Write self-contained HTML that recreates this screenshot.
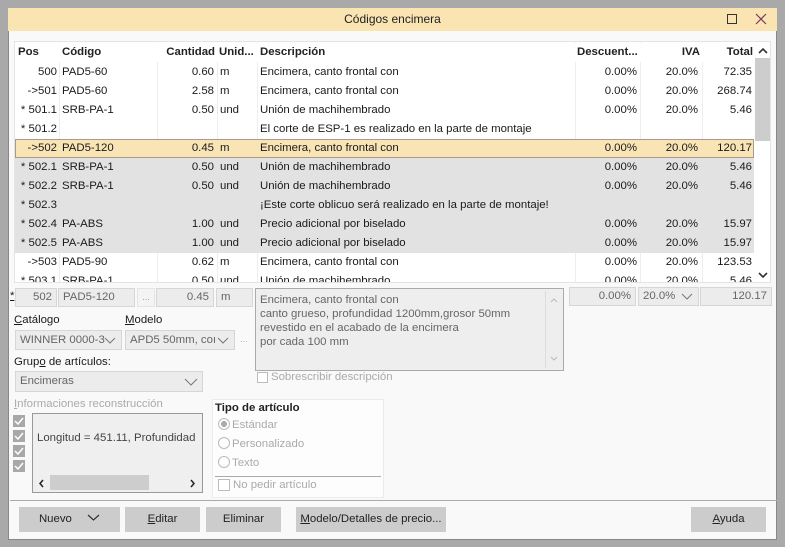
<!DOCTYPE html>
<html><head><meta charset="utf-8">
<style>
*{box-sizing:border-box;margin:0;padding:0}
body{width:785px;height:547px;overflow:hidden;background:#a9a9a9;font-family:"Liberation Sans",sans-serif;font-size:11.4px;color:#1a1a1a;position:relative}
.a{position:absolute}
#win{left:8px;top:8px;width:769px;height:532px;background:#f9f9f9;border:1px solid #888}
#title{left:8px;top:8px;width:769px;height:23px;background:#f9e4b2;text-align:center;line-height:22px;font-size:12px;color:#222}
#grid{left:14px;top:41px;width:757px;height:242px;background:#fff;border:1px solid #e4e4e4;overflow:hidden}
.row{position:absolute;left:0;width:739px;height:19px;line-height:19px;white-space:nowrap}
.c{position:absolute;top:0;height:19px;overflow:hidden}
.r{text-align:right}
.hdr{font-weight:bold;color:#222}
.vl{position:absolute;top:0;width:1px;height:242px;background:#eee}
.fld{position:absolute;height:19px;border:1px solid #d6d6d6;background:#ececec;color:#666;line-height:17px;padding:0 4px;white-space:nowrap;overflow:hidden}
.btn{position:absolute;top:507px;height:25px;background:#cccccc;text-align:center;line-height:25px;color:#222}
.lbl{position:absolute;white-space:nowrap}
.gr{color:#aaa}
.rad{display:inline-block;width:12px;height:12px;border:1px solid #bbb;border-radius:50%;vertical-align:-2px;margin-right:2px;position:relative}
</style></head><body>
<div id="win" class="a"></div>
<div id="title" class="a">Códigos encimera</div>
<div class="a" style="left:727px;top:14px;width:10px;height:10px;border:1px solid #333"></div>
<svg class="a" style="left:755px;top:13px" width="12" height="12"><path d="M1 1L11 11M11 1L1 11" stroke="#7a3a6a" stroke-width="1.2"/></svg>

<div id="grid" class="a">
 <div class="vl" style="left:44px"></div><div class="vl" style="left:142px"></div><div class="vl" style="left:202px"></div><div class="vl" style="left:242px"></div><div class="vl" style="left:560px"></div><div class="vl" style="left:625px"></div><div class="vl" style="left:687px"></div>
 <div class="row hdr" style="top:1px;background:#fff">
  <div class="c" style="left:3px">Pos</div><div class="c" style="left:47px">Código</div><div class="c r" style="left:142px;width:58px">Cantidad</div><div class="c" style="left:204px;width:38px">Unid...</div><div class="c" style="left:245px">Descripción</div><div class="c" style="left:562px;width:62px">Descuent...</div><div class="c r" style="left:626px;width:59px">IVA</div><div class="c r" style="left:688px;width:50px">Total</div>
 </div>
 <div id="rows"></div>
 <div class="a" style="left:740px;top:0;width:16px;height:242px;background:#fff"></div>
 <div class="a" style="left:740px;top:16px;width:15px;height:83px;background:#cdcdcd"></div>
 <svg class="a" style="left:743px;top:5px" width="10" height="7"><path d="M1 6L5 2L9 6" stroke="#333" stroke-width="1.6" fill="none"/></svg>
 <svg class="a" style="left:743px;top:230px" width="10" height="7"><path d="M1 1L5 5L9 1" stroke="#333" stroke-width="1.6" fill="none"/></svg>
</div>

<div class="lbl" style="left:10px;top:290px;text-decoration:underline">*</div>
<div class="fld r" style="left:15px;top:288px;width:42px">502</div>
<div class="fld" style="left:58px;top:288px;width:77px">PAD5-120</div>
<div class="fld" style="left:137px;top:288px;width:18px;background:#f4f4f4;border-color:#e4e4e4;text-align:center;font-size:9px;color:#999">...</div>
<div class="fld r" style="left:156px;top:288px;width:58px">0.45</div>
<div class="fld" style="left:216px;top:288px;width:37px">m</div>
<div class="a" style="left:255px;top:288px;width:309px;height:83px;border:1px solid #aaa;background:#eeeeee;color:#666;padding:4px 4px;line-height:14px">Encimera, canto frontal con<br>canto grueso, profundidad 1200mm,grosor 50mm<br>revestido en el acabado de la encimera<br>por cada 100 mm</div>
<div class="a" style="left:545px;top:291px;width:1px;height:77px;background:#ddd"></div>
<svg class="a" style="left:550px;top:297px" width="8" height="6"><path d="M1 5L4 2L7 5" stroke="#bbb" fill="none"/></svg>
<svg class="a" style="left:550px;top:356px" width="8" height="6"><path d="M1 1L4 4L7 1" stroke="#bbb" fill="none"/></svg>
<div class="fld r" style="left:569px;top:287px;width:67px">0.00%</div>
<div class="fld" style="left:638px;top:287px;width:61px">20.0%<svg class="a" style="left:42px;top:5px" width="12" height="7"><path d="M1 1L6 6L11 1" stroke="#777" fill="none"/></svg></div>
<div class="fld r" style="left:700px;top:287px;width:72px">120.17</div>

<div class="lbl" style="left:14px;top:314px"><u>C</u>atálogo</div>
<div class="lbl" style="left:125px;top:314px"><u>M</u>odelo</div>
<div class="fld" style="left:15px;top:330px;width:107px;height:20px;line-height:18px">WINNER 0000-3<svg class="a" style="left:88px;top:6px" width="12" height="7"><path d="M1 1L6 6L11 1" stroke="#777" fill="none"/></svg></div>
<div class="fld" style="left:125px;top:330px;width:110px;height:20px;line-height:18px">APD5 50mm, coı<svg class="a" style="left:91px;top:6px" width="12" height="7"><path d="M1 1L6 6L11 1" stroke="#777" fill="none"/></svg></div>
<div class="lbl gr" style="left:240px;top:334px;font-size:9px">...</div>
<div class="lbl" style="left:14px;top:356px">Grup<u>o</u> de artículos:</div>
<div class="fld" style="left:15px;top:371px;width:188px;height:21px;line-height:19px">Encimeras<svg class="a" style="left:168px;top:6px" width="14" height="8"><path d="M1 1L7 7L13 1" stroke="#777" fill="none"/></svg></div>
<div class="a" style="left:257px;top:372px;width:11px;height:11px;border:1px solid #bbb;background:#fff"></div>
<div class="lbl gr" style="left:271px;top:371px">Sobrescribir descripción</div>

<div class="lbl gr" style="left:14px;top:398px"><u>I</u>nformaciones reconstrucción</div>
<svg class="a" style="left:13px;top:415px" width="13" height="58">
<g fill="#a8a8a8"><rect x="0" y="0" width="12" height="12"/><rect x="0" y="15" width="12" height="12"/><rect x="0" y="30" width="12" height="12"/><rect x="0" y="45" width="12" height="12"/></g>
<g stroke="#fff" stroke-width="1.5" fill="none"><path d="M2 6L5 9L10 3"/><path d="M2 21L5 24L10 18"/><path d="M2 36L5 39L10 33"/><path d="M2 51L5 54L10 48"/></g></svg>
<div class="a" style="left:32px;top:413px;width:171px;height:80px;border:1px solid #999;background:#efefef"></div>
<div class="lbl" style="left:37px;top:432px;color:#444">Longitud = 451.11, Profundidad</div>
<div class="a" style="left:50px;top:475px;width:99px;height:15px;background:#cdcdcd"></div>
<svg class="a" style="left:38px;top:479px" width="7" height="9"><path d="M5 1L2 4.5L5 8" stroke="#222" stroke-width="1.5" fill="none"/></svg>
<svg class="a" style="left:189px;top:479px" width="7" height="9"><path d="M2 1L5 4.5L2 8" stroke="#222" stroke-width="1.5" fill="none"/></svg>

<div class="a" style="left:212px;top:399px;width:172px;height:99px;border:1px solid #ececec;background:#fdfdfd"></div>
<div class="lbl" style="left:215px;top:402px;font-weight:bold;color:#222">Tipo de artículo</div>
<div class="lbl gr" style="left:218px;top:418px"><span class="rad"><span class="a" style="left:2px;top:2px;width:6px;height:6px;border-radius:50%;background:#aaa"></span></span>Estándar</div>
<div class="lbl gr" style="left:218px;top:437px"><span class="rad"></span>Personalizado</div>
<div class="lbl gr" style="left:218px;top:456px"><span class="rad"></span>Texto</div>
<div class="a" style="left:215px;top:476px;width:166px;height:1px;background:#aaa"></div>
<div class="a" style="left:218px;top:479px;width:12px;height:12px;border:1px solid #bbb;background:#fff"></div>
<div class="lbl gr" style="left:233px;top:479px">No pedir artículo</div>

<div class="a" style="left:10px;top:500px;width:767px;height:1px;background:#aaa"></div>
<div class="btn" style="left:19px;width:101px">Nuevo <svg style="margin-left:12px;vertical-align:1px" width="13" height="7"><path d="M1 1L6.5 6L12 1" stroke="#333" fill="none" stroke-width="1.2"/></svg></div>
<div class="btn" style="left:125px;width:75px"><u>E</u>ditar</div>
<div class="btn" style="left:206px;width:75px">Eliminar</div>
<div class="btn" style="left:296px;width:150px"><u>M</u>odelo/Detalles de precio...</div>
<div class="btn" style="left:691px;width:75px"><u>A</u>yuda</div>

<script>
var d=[
["500","PAD5-60","0.60","m","Encimera, canto frontal con","0.00%","20.0%","72.35",0],
["->501","PAD5-60","2.58","m","Encimera, canto frontal con","0.00%","20.0%","268.74",0],
["* 501.1","SRB-PA-1","0.50","und","Unión de machihembrado","0.00%","20.0%","5.46",0],
["* 501.2","","","","El corte de ESP-1 es realizado en la parte de montaje","","","",0],
["->502","PAD5-120","0.45","m","Encimera, canto frontal con","0.00%","20.0%","120.17",1],
["* 502.1","SRB-PA-1","0.50","und","Unión de machihembrado","0.00%","20.0%","5.46",2],
["* 502.2","SRB-PA-1","0.50","und","Unión de machihembrado","0.00%","20.0%","5.46",2],
["* 502.3","","","","¡Este corte oblicuo será realizado en la parte de montaje!","","","",2],
["* 502.4","PA-ABS","1.00","und","Precio adicional por biselado","0.00%","20.0%","15.97",2],
["* 502.5","PA-ABS","1.00","und","Precio adicional por biselado","0.00%","20.0%","15.97",2],
["->503","PAD5-90","0.62","m","Encimera, canto frontal con","0.00%","20.0%","123.53",0],
["* 503.1","SRB-PA-1","0.50","und","Unión de machihembrado","0.00%","20.0%","5.46",0]];
var h="";
d.forEach(function(r,i){
 var bg=r[8]==1?"background:#f9e4b5;box-shadow:inset 0 0 0 1px #a89c88;":r[8]==2?"background:#e2e2e2;":"";
 var t=21+i*19;
 h+='<div class="row" style="top:'+t+'px;'+bg+'">'+
 '<div class="c r" style="left:0;width:42px">'+r[0]+'</div>'+
 '<div class="c" style="left:47px">'+r[1]+'</div>'+
 '<div class="c r" style="left:142px;width:57px">'+r[2]+'</div>'+
 '<div class="c" style="left:205px">'+r[3]+'</div>'+
 '<div class="c" style="left:245px;width:314px">'+r[4]+'</div>'+
 '<div class="c r" style="left:560px;width:62px">'+r[5]+'</div>'+
 '<div class="c r" style="left:626px;width:57px">'+r[6]+'</div>'+
 '<div class="c r" style="left:688px;width:49px">'+r[7]+'</div></div>';
});
document.getElementById("rows").innerHTML=h;
</script>
</body></html>
